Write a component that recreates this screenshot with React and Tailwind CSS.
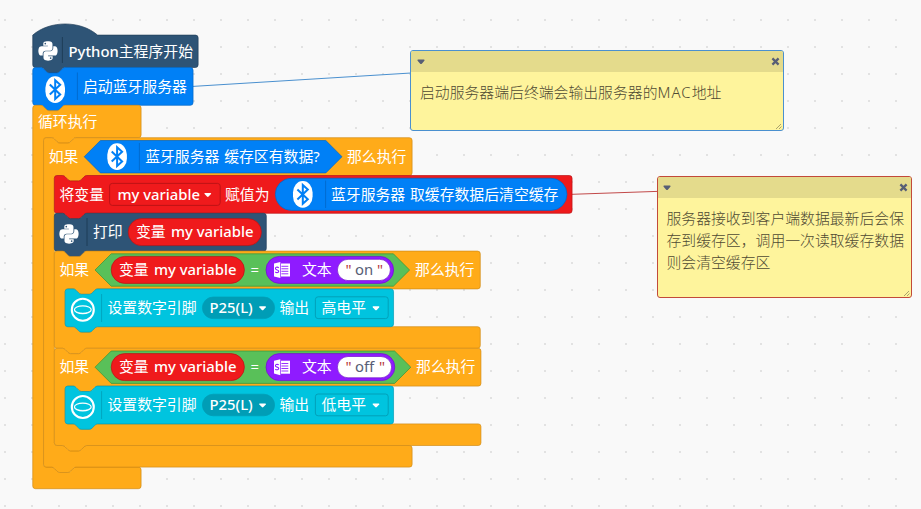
import React from "react";
import { FaPython } from "react-icons/fa";

// Connector outline, drawn left-to-right (top edge) and right-to-left (bottom edge)
const NOTCH = "c2,0 3,1 4,2 l4,4 c1,1 2,2 4,2 h12 c2,0 3,-1 4,-2 l4,-4 c1,-1 2,-2 4,-2";
const NOTCH_BACK = "c-2,0 -3,1 -4,2 l-4,4 c-1,1 -2,2 -4,2 h-12 c-2,0 -3,-1 -4,-2 l-4,-4 c-1,-1 -2,-2 -4,-2";

const SCALE = 0.675;
const ORIGIN_X = 32.75;
const ORIGIN_Y = 35.1;

function stackPath(w, h) {
  return `M0,4 A4,4 0 0,1 4,0 H12 ${NOTCH} H${w - 4} a4,4 0 0,1 4,4 V${h - 4} a4,4 0 0,1 -4,4 H48 ${NOTCH_BACK} H4 a4,4 0 0,1 -4,-4 z`;
}

function hatPath(w, h) {
  return `M0,0 c25,-22 71,-22 96,0 H${w - 4} a4,4 0 0,1 4,4 V${h - 4} a4,4 0 0,1 -4,4 H48 ${NOTCH_BACK} H4 a4,4 0 0,1 -4,-4 z`;
}

function wrapPath(w, head, mouth, last) {
  const foot = last ? "H4" : `H48 ${NOTCH_BACK} H4`;
  return `M0,4 A4,4 0 0,1 4,0 H12 ${NOTCH} H${w - 4} a4,4 0 0,1 4,4 V${head - 4} a4,4 0 0,1 -4,4 H64 ${NOTCH_BACK} h-8 a4,4 0 0,0 -4,4 v${mouth - 8} a4,4 0 0,0 4,4 h8 ${NOTCH} H${w - 4} a4,4 0 0,1 4,4 v24 a4,4 0 0,1 -4,4 ${foot} a4,4 0 0,1 -4,-4 z`;
}

const BLOCKS = [
  { x: 0, y: 0, d: hatPath(245, 48), fill: "#2e5476", stroke: "#223f59" },
  { x: 0, y: 48, d: stackPath(237.5, 56), fill: "#0080f6", stroke: "#0066c5" },
  { x: 0, y: 104, d: wrapPath(160.5, 48, 488, true), fill: "#ffab19", stroke: "#cf8b17" },
  { x: 16, y: 152, d: wrapPath(546, 56, 400, false), fill: "#ffab19", stroke: "#cf8b17" },
  { x: 32, y: 208, d: stackPath(767, 56), fill: "#ef1a1c", stroke: "#b81215" },
  { x: 32, y: 264, d: stackPath(314, 56), fill: "#2e5476", stroke: "#223f59" },
  { x: 32, y: 320, d: wrapPath(631, 56, 56, false), fill: "#ffab19", stroke: "#cf8b17" },
  { x: 48, y: 376, d: stackPath(486.5, 56), fill: "#00c4df", stroke: "#009db6" },
  { x: 32, y: 464, d: wrapPath(632, 56, 56, false), fill: "#ffab19", stroke: "#cf8b17" },
  { x: 48, y: 520, d: stackPath(486.5, 56), fill: "#00c4df", stroke: "#009db6" },
];

function Hex({ x1, x2, cy, fill, stroke }) {
  const h = 16.2;
  return (
    <path
      d={`M${x1},${cy} L${x1 + h},${cy - h} H${x2 - h} L${x2},${cy} L${x2 - h},${cy + h} H${x1 + h} z`}
      fill={fill}
      stroke={stroke}
      strokeWidth="0.7"
    />
  );
}

function Pill({ x1, x2, y1, y2, fill, stroke }) {
  return (
    <rect x={x1} y={y1} width={x2 - x1} height={y2 - y1} rx={(y2 - y1) / 2} fill={fill} stroke={stroke} strokeWidth="0.7" />
  );
}

function Slot({ x1, x2, y1, y2, stroke }) {
  return <rect x={x1} y={y1} width={x2 - x1} height={y2 - y1} rx="2.7" fill="none" stroke={stroke} strokeWidth="0.9" />;
}

function Arrow({ x, y }) {
  return <path d={`M${x - 2.8},${y - 2} h5.6 q1,0.3 0.4,1 l-2.4,2.6 q-0.8,0.7 -1.6,0 l-2.4,-2.6 q-0.6,-0.8 0.4,-1 z`} fill="#fff" />;
}

function Divider({ x, y1, y2, stroke }) {
  return <path d={`M${x},${y1} V${y2}`} stroke={stroke} strokeWidth="0.8" />;
}

function Bluetooth({ x, y }) {
  return (
    <g transform={`translate(${x} ${y})`}>
      <rect x="-9.8" y="-13.3" width="19.6" height="26.6" rx="9.6" ry="11.5" fill="#fff" />
      <path d="M-5.4,-5 L5,4.8 L0,9.4 V-9.4 L5,-4.8 L-5.4,5" fill="none" stroke="#0080f6" strokeWidth="2" />
    </g>
  );
}

function Ring({ x, y }) {
  return (
    <g transform={`translate(${x} ${y})`} fill="none" stroke="#fff">
      <circle r="11" strokeWidth="2.1" />
      <ellipse rx="8.4" ry="3.9" strokeWidth="1.2" />
      <path d="M-7.6,0.9 C-5.5,4.2 5.5,4.2 7.6,0.9" strokeWidth="0.7" />
    </g>
  );
}

function TextIcon({ x, y }) {
  return (
    <g transform={`translate(${x} ${y})`}>
      <path d="M7,1.5 H16 V14.5 H7 z" fill="#fff" />
      <path d="M0,1.6 L6.3,0 V16 L0,14.4 z" fill="#fff" />
      <path d="M7.4,4.3 H14.3 M7.4,6.8 H14.3 M7.4,9.3 H14.3 M7.4,11.8 H14.3" stroke="#8f1bff" strokeWidth="0.9" />
      <path d="M4.8,5.7 C3,4.5 1,5.5 1.5,6.9 C2,8.3 4.6,7.6 4.7,9.2 C4.8,10.8 2.6,11 1.3,10" fill="none" stroke="#8f1bff" strokeWidth="1.1" />
    </g>
  );
}

function Shapes() {
  return (
    <svg className="absolute inset-0" width="921" height="509" viewBox="0 0 921 509">
      <path d="M193,86.4 L411,73" stroke="#4a90cf" strokeWidth="1" />
      <path d="M572,194.3 L657,191.4" stroke="#c24a4a" strokeWidth="1" />
      <g transform={`translate(${ORIGIN_X} ${ORIGIN_Y}) scale(${SCALE})`}>
        {BLOCKS.map((b) => (
          <path key={`${b.x}-${b.y}`} transform={`translate(${b.x} ${b.y})`} d={b.d} fill={b.fill} stroke={b.stroke} strokeWidth="1" />
        ))}
      </g>

      <Divider x={62.4} y1={37} y2={63} stroke="#1b3850" />
      <Divider x={77.4} y1={72.5} y2={100} stroke="#0066c5" />
      <Bluetooth x={55.2} y={89.6} />

      <Hex x1={84.2} x2={342} cy={156.7} fill="#0080f6" stroke="#0066c5" />
      <Bluetooth x={117.1} y={156.6} />
      <Divider x={139.4} y1={143} y2={170.5} stroke="#0066c5" />

      <Slot x1={109.6} x2={220.2} y1={183.4} y2={205.4} stroke="#b81215" />
      <Arrow x={207.8} y={195} />
      <Pill x1={275.3} x2={567} y1={178.2} y2={210.4} fill="#0080f6" stroke="#0066c5" />
      <Bluetooth x={302.8} y={194.4} />
      <Divider x={325.6} y1={180.5} y2={208} stroke="#0066c5" />

      <Divider x={87} y1={218} y2={246} stroke="#1b3850" />
      <Pill x1={128.2} x2={261.4} y1={218.6} y2={245.6} fill="#ef1a1c" stroke="#b81215" />

      <Hex x1={95} x2={409.6} cy={270} fill="#59c059" stroke="#389438" />
      <Pill x1={111.2} x2={244.4} y1={256.4} y2={283.4} fill="#ef1a1c" stroke="#b81215" />
      <Pill x1={266} x2={393.6} y1={256.4} y2={283.4} fill="#8f1bff" stroke="#6f12c9" />
      <TextIcon x={274} y={262} />
      <Pill x1={337.4} x2={390.4} y1={259.3} y2={280.6} fill="#fff" stroke="#6f12c9" />

      <Ring x={82.8} y={309.8} />
      <Divider x={101.6} y1={294} y2={322} stroke="#009db6" />
      <Pill x1={202.4} x2={274.6} y1={297} y2={318.6} fill="#009db6" stroke="#009db6" />
      <Arrow x={262.6} y={308.3} />
      <Slot x1={315.4} x2={388.2} y1={296.8} y2={318.6} stroke="#009db6" />
      <Arrow x={376} y={308.3} />

      <Hex x1={95} x2={410.8} cy={367.2} fill="#59c059" stroke="#389438" />
      <Pill x1={111.2} x2={244.4} y1={353.6} y2={380.6} fill="#ef1a1c" stroke="#b81215" />
      <Pill x1={266} x2={394.8} y1={353.6} y2={380.6} fill="#8f1bff" stroke="#6f12c9" />
      <TextIcon x={274} y={359.2} />
      <Pill x1={337.4} x2={391.6} y1={356.5} y2={377.8} fill="#fff" stroke="#6f12c9" />

      <Ring x={82.8} y={407} />
      <Divider x={101.6} y1={391.2} y2={419} stroke="#009db6" />
      <Pill x1={202.4} x2={274.6} y1={394.2} y2={415.8} fill="#009db6" stroke="#009db6" />
      <Arrow x={262.6} y={405.5} />
      <Slot x1={315.4} x2={388.2} y1={394} y2={415.8} stroke="#009db6" />
      <Arrow x={376} y={405.5} />
    </svg>
  );
}

// One line of block labels, centred on the block's header
function Row({ className, children }) {
  return <div className={`absolute flex h-6 items-center whitespace-nowrap text-white ${className}`}>{children}</div>;
}

function T({ className = "", children }) {
  return <span className={`shrink-0 ${className}`}>{children}</span>;
}

function Note({ className, border, lines, arrowClass, textClass }) {
  return (
    <div className={`absolute flex flex-col overflow-hidden rounded-[3px] border bg-[#fef49c] ${border} ${className}`}>
      <div className={`flex h-[21px] shrink-0 items-center justify-between bg-[#e4db8c] pr-[3px] ${arrowClass}`}>
        <svg width="8" height="6" viewBox="0 0 8 6">
          <path d="M1,0.6 h6 q1,0.4 0.4,1.2 l-2.6,2.9 q-0.8,0.8 -1.6,0 l-2.6,-2.9 q-0.6,-0.8 0.4,-1.2 z" fill="#575e75" />
        </svg>
        <svg width="9" height="9" viewBox="0 0 9 9">
          <path d="M1.4,1.4 L7.6,7.6 M7.6,1.4 L1.4,7.6" stroke="#575e75" strokeWidth="2.3" />
        </svg>
      </div>
      <div className={`whitespace-nowrap text-[14.85px] leading-[22.2px] font-light text-[#4f4a33] ${textClass}`}>
        {lines.map((l, i) => (
          <div key={i}>{l}</div>
        ))}
      </div>
      <svg className="absolute right-0 bottom-0" width="8" height="8" viewBox="0 0 8 8">
        <path d="M1,7 L6,2 M4,7 L6.5,4.5" stroke="#948e5f" strokeWidth="0.8" />
      </svg>
    </div>
  );
}

function PinRow({ className, level }) {
  return (
    <Row className={className}>
      <T className="w-[102px]">设置数字引脚</T>
      <T className="w-[70px] font-medium">P25(L)</T>
      <T className="w-[42px]">输出</T>
      <T>{level}</T>
    </Row>
  );
}

function IfRow({ className, value, valueClass, tailClass }) {
  return (
    <Row className={className}>
      <T className="w-[59.5px]">如果</T>
      <T className="w-[35px]">变量</T>
      <T className="w-[96.5px] font-medium">my variable</T>
      <T className="w-[51.5px]">=</T>
      <T className="w-[43.5px]">文本</T>
      <T className="w-[9.5px] text-[#b5373b]">"</T>
      <T className={`text-[#575e75] ${valueClass}`}>{value}</T>
      <T className="text-[#b5373b]">"</T>
      <T className={tailClass}>那么执行</T>
    </Row>
  );
}

export default function App() {
  return (
    <main className="relative h-[509px] w-[921px] overflow-hidden bg-[#f9f9f9] bg-[conic-gradient(at_2px_2px,transparent_75%,#e2e2e2_0)] bg-[length:27px_27px] bg-[position:4px_19px] font-['Noto_Sans','Noto_Sans_CJK_SC',sans-serif] text-[14.85px] font-normal">
      <Shapes />
      <FaPython className="absolute top-[40px] left-[36.5px] size-[22px] text-white" />
      <FaPython className="absolute top-[223px] left-[57.8px] size-[22px] text-white" />

      <Row className="top-[39px] left-[68.5px]">
        <T className="font-medium">Python</T>
        <T>主程序开始</T>
      </Row>
      <Row className="top-[74.5px] left-[83px]">
        <T>启动蓝牙服务器</T>
      </Row>
      <Row className="top-[109.5px] left-[38px]">
        <T>循环执行</T>
      </Row>
      <Row className="top-[144.5px] left-[48.7px]">
        <T className="w-[96.5px]">如果</T>
        <T className="w-[79px]">蓝牙服务器</T>
        <T className="w-[122.8px]">缓存区有数据?</T>
        <T>那么执行</T>
      </Row>
      <Row className="top-[182px] left-[59.5px]">
        <T className="w-[58px]">将变量</T>
        <T className="w-[107.5px] font-medium">my variable</T>
        <T className="w-[106px]">赋值为</T>
        <T className="w-[79px]">蓝牙服务器</T>
        <T>取缓存数据后清空缓存</T>
      </Row>
      <Row className="top-[219.5px] left-[93px]">
        <T className="w-[43px]">打印</T>
        <T className="w-[35px]">变量</T>
        <T className="font-medium">my variable</T>
      </Row>
      <IfRow className="top-[257.4px] left-[59.5px]" value="on" valueClass="w-[22px]" tailClass="ml-[32px]" />
      <PinRow className="top-[295.4px] left-[107.5px]" level="高电平" />
      <IfRow className="top-[354.4px] left-[59.5px]" value="off" valueClass="w-[24px]" tailClass="ml-[31px]" />
      <PinRow className="top-[392.4px] left-[107.5px]" level="低电平" />

      <Note
        className="top-[50px] left-[410px] h-[81px] w-[374px]"
        border="border-[#4a90cf]"
        arrowClass="pl-[6px]"
        textClass="pt-[9px] pl-[9px]"
        lines={[
          <>
            启动服务器端后终端会输出服务器的<span className="tracking-[1.1px]">MAC</span>地址
          </>,
        ]}
      />
      <Note
        className="top-[176px] left-[657px] h-[122px] w-[255px]"
        border="border-[#c24a3a]"
        arrowClass="pl-[5px]"
        textClass="pt-[8.5px] pl-[8.5px]"
        lines={["服务器接收到客户端数据最新后会保", "存到缓存区，调用一次读取缓存数据", "则会清空缓存区"]}
      />
    </main>
  );
}
